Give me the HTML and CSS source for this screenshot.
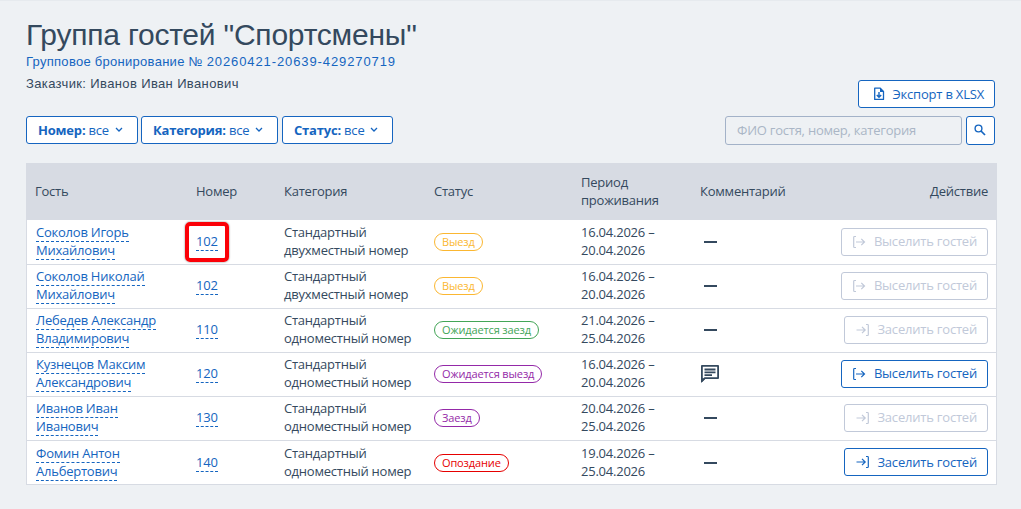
FILE: index.html
```html
<!DOCTYPE html>
<html lang="ru">
    <head>
        <meta charset="utf-8">
        <meta name="viewport" content="width=device-width, initial-scale=1">
        <title>Группа гостей "Спортсмены"</title>
        <link rel="stylesheet" href="styles.css">
    </head>
    <body>
        <svg class="sprite">
            <symbol id="chevron" viewBox="0 0 8 6"><path d="M1 1l3 3 3-3" fill="none" stroke="currentColor" stroke-width="1.3"/></symbol>
            <symbol id="out" viewBox="0 0 14 14"><path d="M4 1.500H2.500Q1.700 1.500 1.700 2.300V11.700Q1.700 12.500 2.500 12.500H4M4 7H12.500M9.300 3.800L12.500 7L9.300 10.200" fill="none" stroke="currentColor" stroke-width="1.2"/></symbol>
            <symbol id="in" viewBox="0 0 14 14"><path d="M10 1.500H11.500Q12.300 1.500 12.300 2.300V11.700Q12.300 12.500 11.500 12.500H10M.5 7H9M6 3.800L9.200 7L6 10.200" fill="none" stroke="currentColor" stroke-width="1.2"/></symbol>
        </svg>
        <div class="container">
            <h1>Группа гостей "Спортсмены"</h1>
            <a class="booking">Групповое бронирование № <span class="number">20260421-20639-429270719</span></a>
            <div class="customer">Заказчик: Иванов Иван Иванович</div>
            <div class="toolbar">
                <div class="filters">
                    <button class="button filter filter-room"><span><b>Номер:</b> все</span><svg class="chevron"><use href="#chevron"/></svg></button>
                    <button class="button filter filter-category"><span><b>Категория:</b> все</span><svg class="chevron"><use href="#chevron"/></svg></button>
                    <button class="button filter filter-status"><span><b>Статус:</b> все</span><svg class="chevron"><use href="#chevron"/></svg></button>
                </div>
                <div class="tools">
                    <button class="button export">
                        <svg width="12" height="14" viewBox="0 0 12 14"><path d="M1.700 1.200H7.300L10.500 4.400V12.400H1.700Z" fill="none" stroke="currentColor" stroke-width="1.3" stroke-linejoin="round"/><path d="M7 1V5H10.800Z" fill="currentColor"/><path d="M6 5V10.200M3.800 8L6 10.200L8.200 8" fill="none" stroke="currentColor" stroke-width="1.4"/></svg>
                        <span>Экспорт в XLSX</span>
                    </button>
                    <div class="search">
                        <input type="text" placeholder="ФИО гостя, номер, категория">
                        <button class="button search-button"><svg width="12" height="12" viewBox="0 0 12 12" fill="none" stroke="currentColor"><circle cx="4.500" cy="4.500" r="3.400" stroke-width="1.4"/><path d="M7 7L11 11" stroke-width="1.7"/></svg></button>
                    </div>
                </div>
            </div>
            <table>
                <colgroup>
                    <col class="col-guest"><col class="col-room"><col class="col-category"><col class="col-status"><col class="col-period"><col class="col-comment"><col>
                </colgroup>
                <thead>
                    <tr><th>Гость</th><th>Номер</th><th>Категория</th><th>Статус</th><th>Период<br>проживания</th><th>Комментарий</th><th class="action">Действие</th></tr>
                </thead>
                <tbody>
                    <tr class="first">
                        <td><a class="link">Соколов Игорь<br>Михайлович</a></td>
                        <td><span class="marked"><a class="link">102</a></span></td>
                        <td>Стандартный<br>двухместный номер</td>
                        <td class="mid"><span class="status yellow">Выезд</span></td>
                        <td>16.04.2026 –<br>20.04.2026</td>
                        <td class="mid"><span class="dash"></span></td>
                        <td class="mid action"><button class="button move" disabled><svg><use href="#out"/></svg><span>Выселить гостей</span></button></td>
                    </tr>
                    <tr>
                        <td><a class="link">Соколов Николай<br>Михайлович</a></td>
                        <td><a class="link">102</a></td>
                        <td>Стандартный<br>двухместный номер</td>
                        <td class="mid"><span class="status yellow">Выезд</span></td>
                        <td>16.04.2026 –<br>20.04.2026</td>
                        <td class="mid"><span class="dash"></span></td>
                        <td class="mid action"><button class="button move" disabled><svg><use href="#out"/></svg><span>Выселить гостей</span></button></td>
                    </tr>
                    <tr>
                        <td><a class="link">Лебедев Александр<br>Владимирович</a></td>
                        <td><a class="link">110</a></td>
                        <td>Стандартный<br>одноместный номер</td>
                        <td class="mid"><span class="status green">Ожидается заезд</span></td>
                        <td>21.04.2026 –<br>25.04.2026</td>
                        <td class="mid"><span class="dash"></span></td>
                        <td class="mid action"><button class="button move move-in" disabled><svg><use href="#in"/></svg><span>Заселить гостей</span></button></td>
                    </tr>
                    <tr>
                        <td><a class="link">Кузнецов Максим<br>Александрович</a></td>
                        <td><a class="link">120</a></td>
                        <td>Стандартный<br>одноместный номер</td>
                        <td class="mid"><span class="status purple">Ожидается выезд</span></td>
                        <td>16.04.2026 –<br>20.04.2026</td>
                        <td class="mid"><svg class="comment" viewBox="0 0 20 20"><path d="M1.900 17V1.900H18.100V14.100H4.800Z" fill="none" stroke="currentColor" stroke-width="1.8" stroke-linejoin="round"/><path d="M1 14V19L5 15Z" fill="currentColor"/><path d="M4.500 5.500H15.500M4.500 8.300H15.500M4.500 11.100H12" stroke="currentColor" stroke-width="1.8"/></svg></td>
                        <td class="mid action"><button class="button move"><svg><use href="#out"/></svg><span>Выселить гостей</span></button></td>
                    </tr>
                    <tr>
                        <td><a class="link">Иванов Иван<br>Иванович</a></td>
                        <td><a class="link">130</a></td>
                        <td>Стандартный<br>одноместный номер</td>
                        <td class="mid"><span class="status purple">Заезд</span></td>
                        <td>20.04.2026 –<br>25.04.2026</td>
                        <td class="mid"><span class="dash"></span></td>
                        <td class="mid action"><button class="button move move-in" disabled><svg><use href="#in"/></svg><span>Заселить гостей</span></button></td>
                    </tr>
                    <tr class="last">
                        <td><a class="link">Фомин Антон<br>Альбертович</a></td>
                        <td><a class="link">140</a></td>
                        <td>Стандартный<br>одноместный номер</td>
                        <td class="mid"><span class="status red">Опоздание</span></td>
                        <td>19.04.2026 –<br>25.04.2026</td>
                        <td class="mid"><span class="dash"></span></td>
                        <td class="mid action"><button class="button move move-in"><svg><use href="#in"/></svg><span>Заселить гостей</span></button></td>
                    </tr>
                </tbody>
            </table>
        </div>
    </body>
</html>
```
FILE: styles.css
```css
* {
    box-sizing: border-box;
}

body {
    margin: 0;
    background-color: #eef1f4;
    border-top: 1px solid #e6eaee;
    font: 13px/18px "Open Sans", sans-serif;
    letter-spacing: -0.23px;
    color: #34495e;
}

.sprite {
    display: none;
}

.container {
    padding: 16px 24px 0 26px;
}

h1 {
    margin: 0;
    font: 30px/36px "Liberation Sans", sans-serif;
    letter-spacing: -0.22px;
    white-space: nowrap;
}

.booking, .customer {
    display: block;
    font: 13px/18px "Liberation Sans", sans-serif;
    letter-spacing: 0.37px;
}

.booking {
    color: #1565c0;
    letter-spacing: 0.28px;
}

.number {
    letter-spacing: 0.9px;
}

.customer {
    margin-top: 4px;
}

.toolbar {
    display: flex;
    justify-content: space-between;
    align-items: flex-end;
    margin: -13px 2px 18px 0;
}

.filters {
    display: flex;
    gap: 4px;
    padding-bottom: 1px;
}

.button {
    display: inline-flex;
    align-items: center;
    height: 28px;
    padding: 0 11px 1px;
    background-color: #fff;
    border: 1px solid #1565c0;
    border-radius: 3px;
    color: #1565c0;
    font: 13px/18px "Open Sans", sans-serif;
    letter-spacing: -0.2px;
    white-space: nowrap;
}

.filter {
    justify-content: space-between;
    padding-right: 14px;
}

.filter-room {
    width: 112px;
    margin-right: -1px;
}

.filter-category {
    width: 137px;
}

.filter-status {
    width: 111px;
}

.chevron {
    width: 8px;
    height: 6px;
    margin-top: 1px;
}

.tools {
    display: flex;
    flex-direction: column;
    align-items: flex-end;
    gap: 8px;
}

.export {
    width: 137px;
    padding: 0 10px 1px 14px;
    justify-content: space-between;
}

.search {
    display: flex;
    gap: 4px;
}

input {
    width: 237px;
    height: 29px;
    padding: 0 11px 2px;
    background: transparent;
    border: 1px solid #a3b2c8;
    border-radius: 3px;
    font: 13px/18px "Open Sans", sans-serif;
    letter-spacing: -0.23px;
}

input::placeholder {
    color: #aab6c6;
}

.search-button {
    width: 29px;
    height: 29px;
    padding: 0 1px 1px 0;
    justify-content: center;
}

table {
    width: 971px;
    table-layout: fixed;
    border-collapse: separate;
    border-spacing: 0;
    background-color: #fff;
    border: 1px solid #d7dbe3;
    border-bottom: none;
}

.col-guest { width: 160px; }
.col-room { width: 88px; }
.col-category { width: 150px; }
.col-status { width: 147px; }
.col-period { width: 119px; }
.col-comment { width: 120px; }

th {
    height: 56px;
    padding: 0 9px 2px;
    background-color: #d7dbe3;
    font-weight: normal;
    text-align: left;
}

th:first-child {
    padding-left: 8px;
}

td {
    height: 44px;
    padding: 0 9px 4px;
    border-bottom: 1px solid #d7dbe3;
    white-space: nowrap;
}

.mid {
    padding-bottom: 2px;
}

.first td {
    height: 45px;
    padding-bottom: 3px;
}

.first .mid {
    padding-bottom: 1px;
}

.last td {
    padding-bottom: 2px;
}

.last .mid {
    padding-bottom: 0;
}

.action {
    padding-left: 0;
    padding-right: 8px;
    text-align: right;
}

.last .action {
    padding-bottom: 1px;
}

.link {
    color: #1565c0;
    border-bottom: 1px dashed #1565c0;
}

/* red frame around the room number */
.marked {
    position: relative;
}

.marked:after {
    content: "";
    position: absolute;
    box-sizing: border-box;
    left: -11px;
    top: -10px;
    width: 44px;
    height: 40px;
    border: 4px solid #fb0007;
    border-radius: 5px;
    box-shadow: 0 0 2px #777;
}

.status {
    display: inline-block;
    height: 18px;
    padding: 0 7px;
    border: 1px solid;
    border-radius: 9px;
    font-size: 11px;
    line-height: 16px;
    letter-spacing: -0.13px;
    vertical-align: middle;
}

.yellow { color: #fbb731; }
.green { color: #43a557; }
.purple { color: #9429a8; }
.red { color: #e60000; }

.dash {
    display: block;
    width: 13px;
    height: 2px;
    margin-left: 4px;
    background-color: #34495e;
}

.comment {
    display: block;
    width: 20px;
    height: 20px;
}

.move {
    width: 147px;
    padding-left: 10px;
    padding-right: 10px;
    justify-content: space-between;
    vertical-align: middle;
}

.move svg {
    width: 14px;
    height: 14px;
    margin-top: 1px;
}

.move-in {
    width: 144px;
    padding-left: 11px;
}

.move:disabled {
    color: #c1c9d9;
    border-color: #c1c9d9;
}
```
